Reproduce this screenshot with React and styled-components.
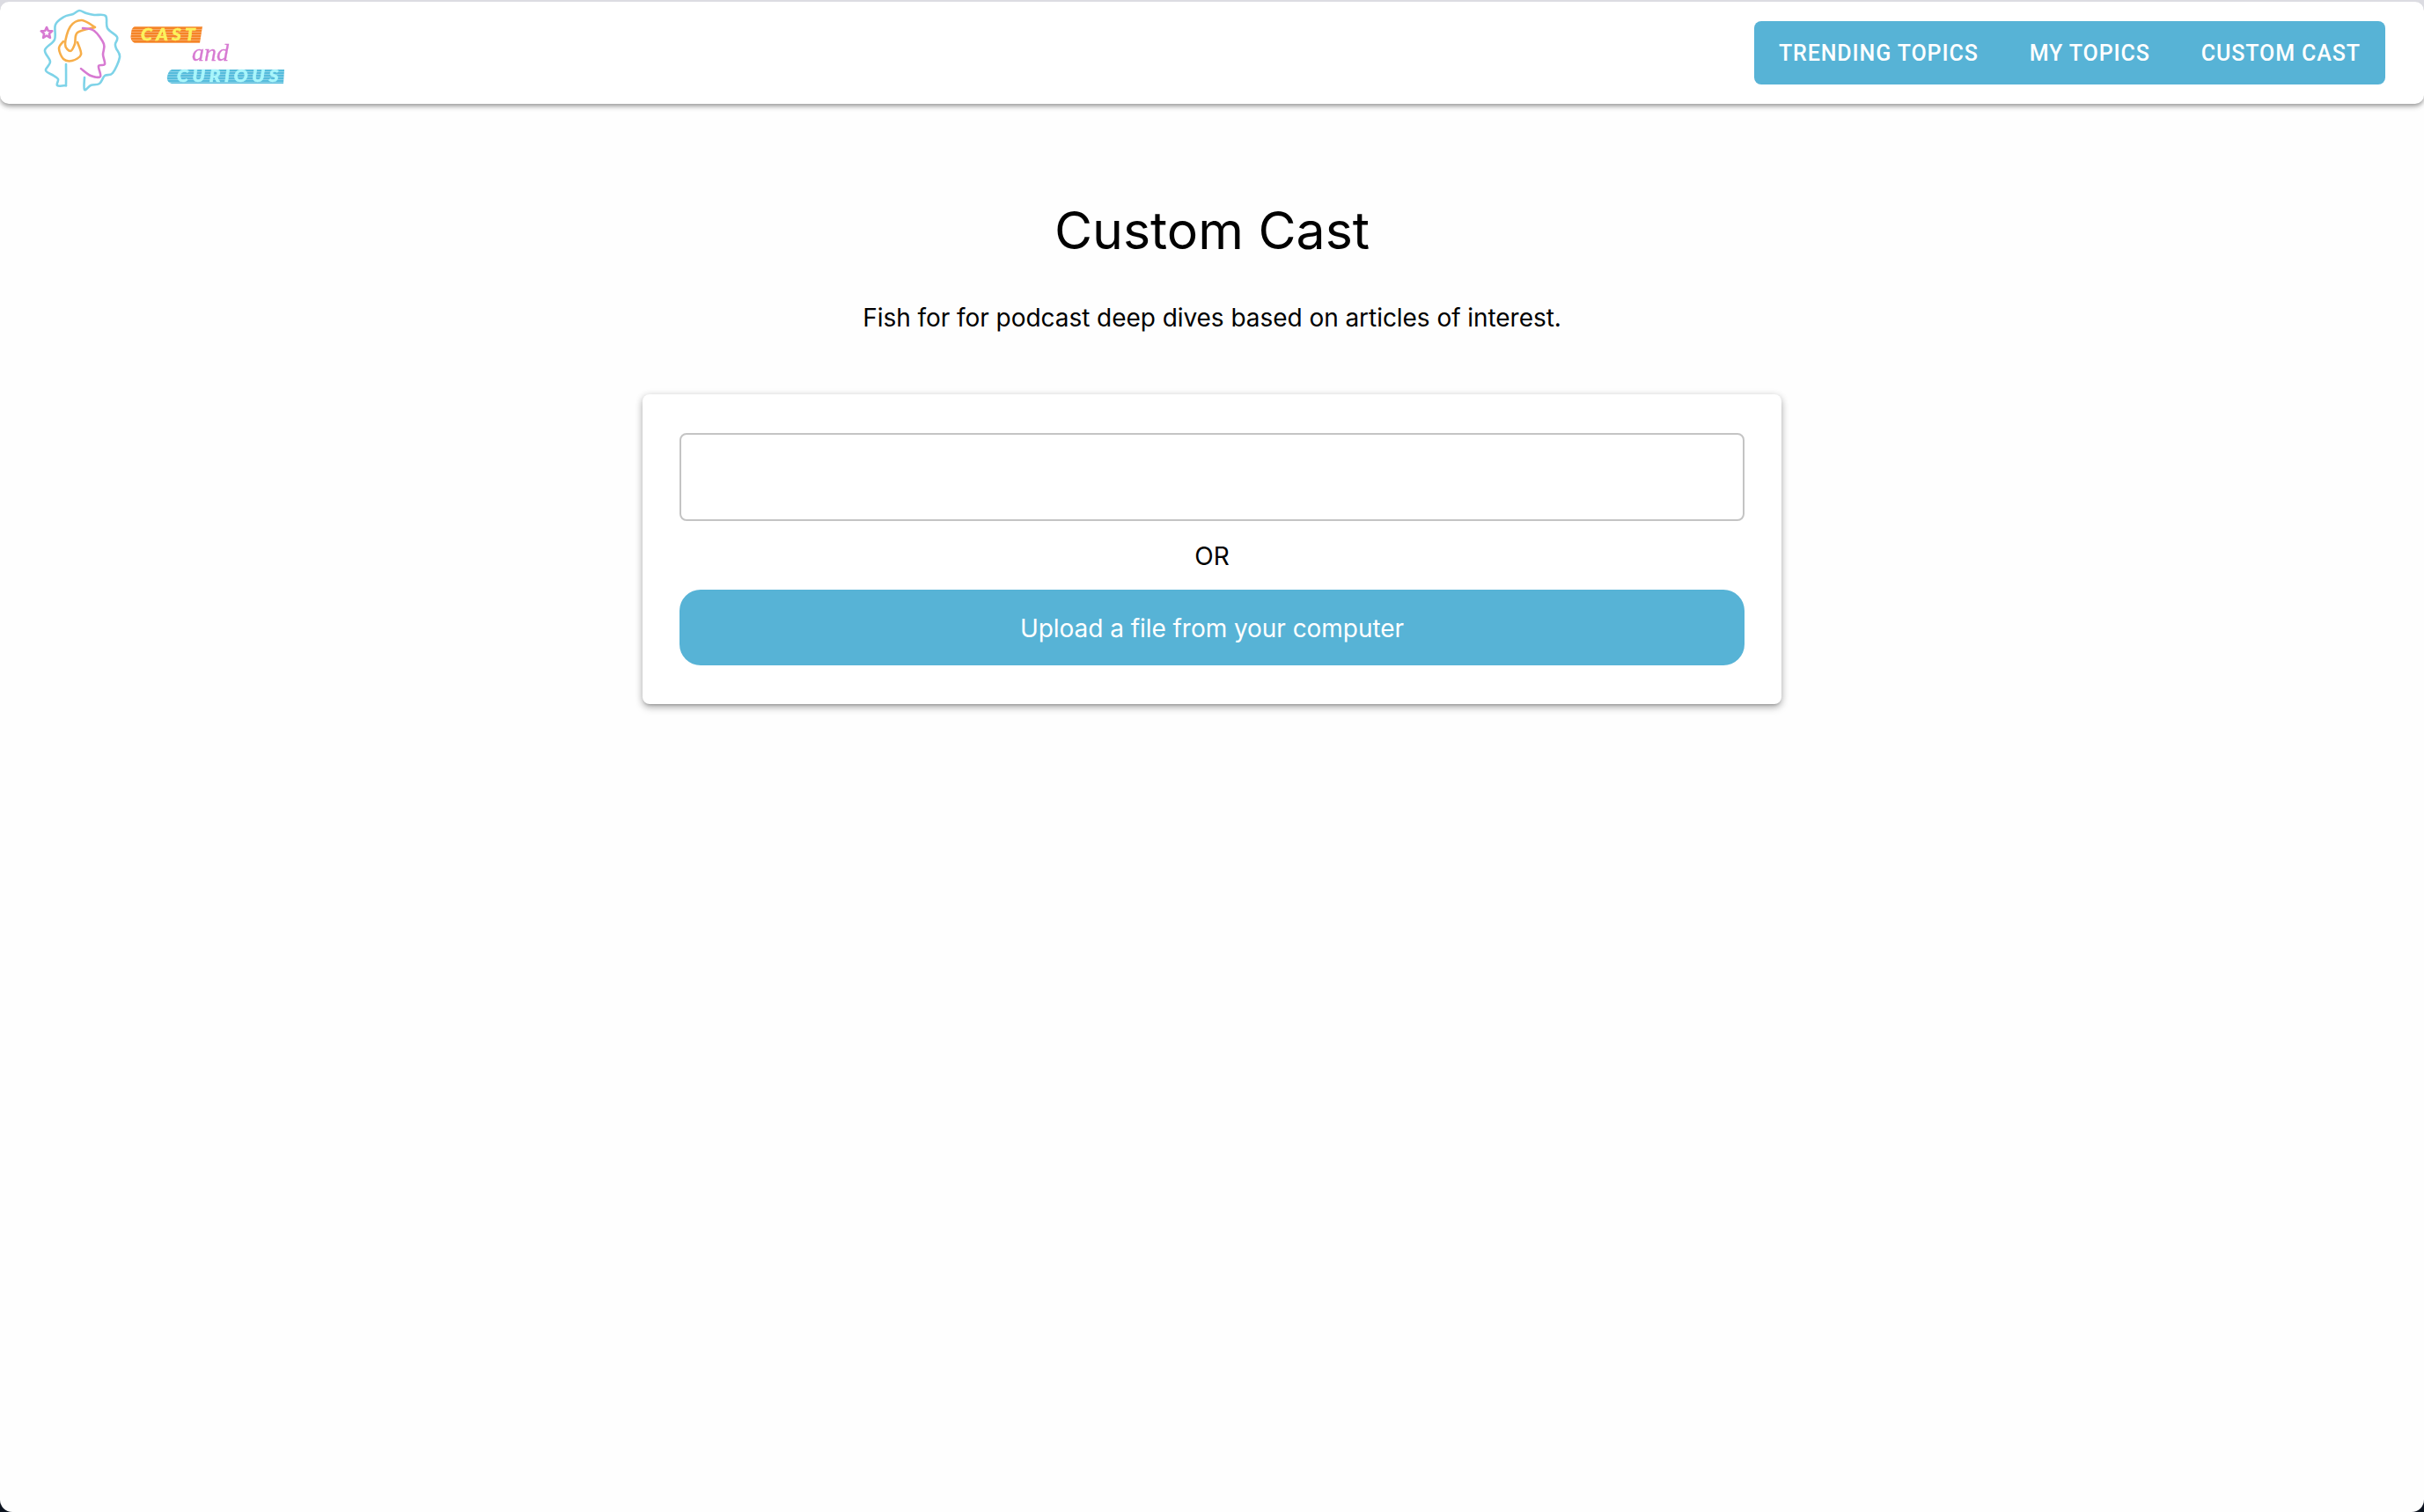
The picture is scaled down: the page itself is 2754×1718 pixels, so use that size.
import styled, { createGlobalStyle } from "styled-components"

const GlobalStyle = createGlobalStyle`
    html, body {
        margin: 0;
        padding: 0;
    }
    body {
        /* window chrome shows behind the rounded page corners */
        background: linear-gradient(#dcdce2 50%, #0d1420 50%);
        font-family: Inter, "Liberation Sans", sans-serif;
        color: #000;
    }
`

// catmull-rom through the points, good enough for the hand drawn neon lines
const smooth = (pts) => {
    let d = `M${pts[0][0]} ${pts[0][1]}`
    for (let i = 0; i < pts.length - 1; i++) {
        const p0 = pts[i - 1] || pts[i]
        const p1 = pts[i]
        const p2 = pts[i + 1]
        const p3 = pts[i + 2] || p2
        const c1x = p1[0] + (p2[0] - p0[0]) / 6
        const c1y = p1[1] + (p2[1] - p0[1]) / 6
        const c2x = p2[0] - (p3[0] - p1[0]) / 6
        const c2y = p2[1] - (p3[1] - p1[1]) / 6
        d += ` C${c1x.toFixed(1)} ${c1y.toFixed(1)} ${c2x.toFixed(1)} ${c2y.toFixed(1)} ${p2[0]} ${p2[1]}`
    }
    return d
}

const outline = [[75, 73], [75, 95], [74, 97], [65, 97], [66, 90], [61, 86], [52, 80], [57, 70], [51, 57], [62, 45], [63, 28], [73, 19], [83, 16], [90, 12], [98, 15], [107, 17], [120, 18], [122, 32], [133, 42], [131, 50], [132, 55], [136, 65], [128, 83], [119, 86], [113, 95], [103, 97], [96, 102], [96, 88]]
const hair = [[108, 31], [93, 23], [80, 30], [74, 50], [80, 58], [85, 50], [88, 37], [108, 31]]
const phones = [[72, 47], [67, 55], [72, 67], [82, 69], [92, 62], [88, 48]]
const face = [[94, 32], [107, 35], [118, 50], [117, 62], [119, 73], [112, 75], [114, 87], [103, 86], [92, 78]]

const castBadge = "M153 30H230L227 49H153Q147 46 149 38Q149 32 153 30Z"
const curiousBadge = "M195 79H323L322 95H195Q189 93 190 87Q191 81 195 79Z"

const Logo = () => (
    <LogoArt viewBox="44 9 286 102" width="286" height="102">
        <defs>
            <pattern id="stripes" width="4" height="3" patternUnits="userSpaceOnUse">
                <rect width="4" height="1" fill="#fff" fillOpacity="0.3" />
            </pattern>
        </defs>
        <g fill="none" strokeWidth="2.6" strokeLinecap="round" strokeLinejoin="round">
            <path d={smooth(outline)} stroke="#7ed3e8" />
            <path d={smooth(hair)} stroke="#f7ae4a" />
            <path d={smooth(phones)} stroke="#f7ae4a" />
            <path d={smooth(face)} stroke="#d77ad2" />
            <path d="M53 31l1.8 4 4.4.4-3.3 3 1 4.4-3.9-2.3-3.9 2.3 1-4.4-3.3-3 4.4-.4z" stroke="#d77ad2" />
        </g>
        <path d={castBadge} fill="#f58426" />
        <path d={castBadge} fill="url(#stripes)" />
        <BadgeText x="160" y="46" $color="#fbf35c" $size={19} textLength="66" lengthAdjust="spacingAndGlyphs">Cast</BadgeText>
        <AndText x="218" y="69">and</AndText>
        <path d={curiousBadge} fill="#55bcdc" />
        <path d={curiousBadge} fill="url(#stripes)" />
        <BadgeText x="201" y="93" $color="#a9f6fb" $size={18} textLength="120" lengthAdjust="spacingAndGlyphs">Curious</BadgeText>
    </LogoArt>
)

const App = () => {
    return (
        <>
            <GlobalStyle />
            <Page>
                <Header>
                    <Logo />
                    <NavGroup>
                        <NavButton>Trending Topics</NavButton>
                        <NavButton>My Topics</NavButton>
                        <NavButton>Custom Cast</NavButton>
                    </NavGroup>
                </Header>
                <Main>
                    <Title>Custom Cast</Title>
                    <Subtitle>Fish for for podcast deep dives based on articles of interest.</Subtitle>
                    <Card>
                        <UrlInput type="text" />
                        <OrText>OR</OrText>
                        <UploadButton>Upload a file from your computer</UploadButton>
                    </Card>
                </Main>
            </Page>
        </>
    )
}

const Page = styled.div`
    height: 1716px;
    margin-top: 2px;
    background: #fefefe;
    border-radius: 10px 10px 14px 14px;
    overflow: hidden;
`
const Header = styled.header`
    height: 116px;
    display: flex;
    justify-content: space-between;
    align-items: center;
    padding: 0 44px;
    background: #fff;
    border-radius: 10px;
    box-shadow: 0 2px 4px -1px rgba(0,0,0,0.25), 0 4px 5px 0 rgba(0,0,0,0.16), 0 1px 10px 0 rgba(0,0,0,0.12);
    position: relative;
`
const LogoArt = styled.svg`
    display: block;
    filter: blur(0.5px);
`
const BadgeText = styled.text`
    font-family: Lato, "Liberation Sans", sans-serif;
    font-weight: 900;
    font-style: italic;
    text-transform: uppercase;
    letter-spacing: 4px;
    font-size: ${(props) => props.$size}px;
    fill: ${(props) => props.$color};
    stroke: ${(props) => props.$color};
    stroke-width: 0.5px;
`
const AndText = styled.text`
    font-family: "Liberation Serif", serif;
    font-style: italic;
    font-size: 28px;
    fill: #d77ad2;
    stroke: #d77ad2;
    stroke-width: 0.3px;
`
const NavGroup = styled.nav`
    display: flex;
    height: 72px;
    background: #57b3d6;
    border-radius: 8px;
`
const NavButton = styled.button`
    padding: 0 29px;
    border: none;
    background: transparent;
    color: #fff;
    font-family: Roboto, "Liberation Sans", sans-serif;
    font-size: 25px;
    font-weight: 500;
    letter-spacing: 0.9px;
    text-transform: uppercase;
    &:first-child { padding-left: 28px; }
    &:last-child { padding-right: 28px; }
`
const Main = styled.main`
    display: flex;
    flex-direction: column;
    align-items: center;
    padding-top: 103px;
`
const Title = styled.h1`
    margin: 0;
    font-size: 59px;
    line-height: 82px;
    font-weight: 400;
`
const Subtitle = styled.p`
    margin: 38px 0 0;
    font-size: 28px;
    line-height: 40px;
    letter-spacing: -0.05px;
`
const Card = styled.section`
    width: 1294px;
    box-sizing: border-box;
    margin-top: 67px;
    padding: 44px 42px;
    background: #fff;
    border-radius: 8px;
    box-shadow: 0 3px 3px -2px rgba(0,0,0,0.2), 0 4px 8px 0 rgba(0,0,0,0.25), 0 1px 8px 0 rgba(0,0,0,0.12);
    display: flex;
    flex-direction: column;
`
const UrlInput = styled.input`
    height: 100px;
    box-sizing: border-box;
    width: 100%;
    border: 2px solid #c4c4c4;
    border-radius: 8px;
    background: #fff;
`
const OrText = styled.div`
    text-align: center;
    font-size: 28px;
    line-height: 40px;
    margin: 20px 0 18px;
`
const UploadButton = styled.button`
    height: 86px;
    padding: 2px 0 0;
    border: none;
    border-radius: 24px;
    background: #57b3d6;
    color: #fff;
    font-family: Inter, "Liberation Sans", sans-serif;
    font-size: 28px;
    letter-spacing: -0.05px;
`

export default App
